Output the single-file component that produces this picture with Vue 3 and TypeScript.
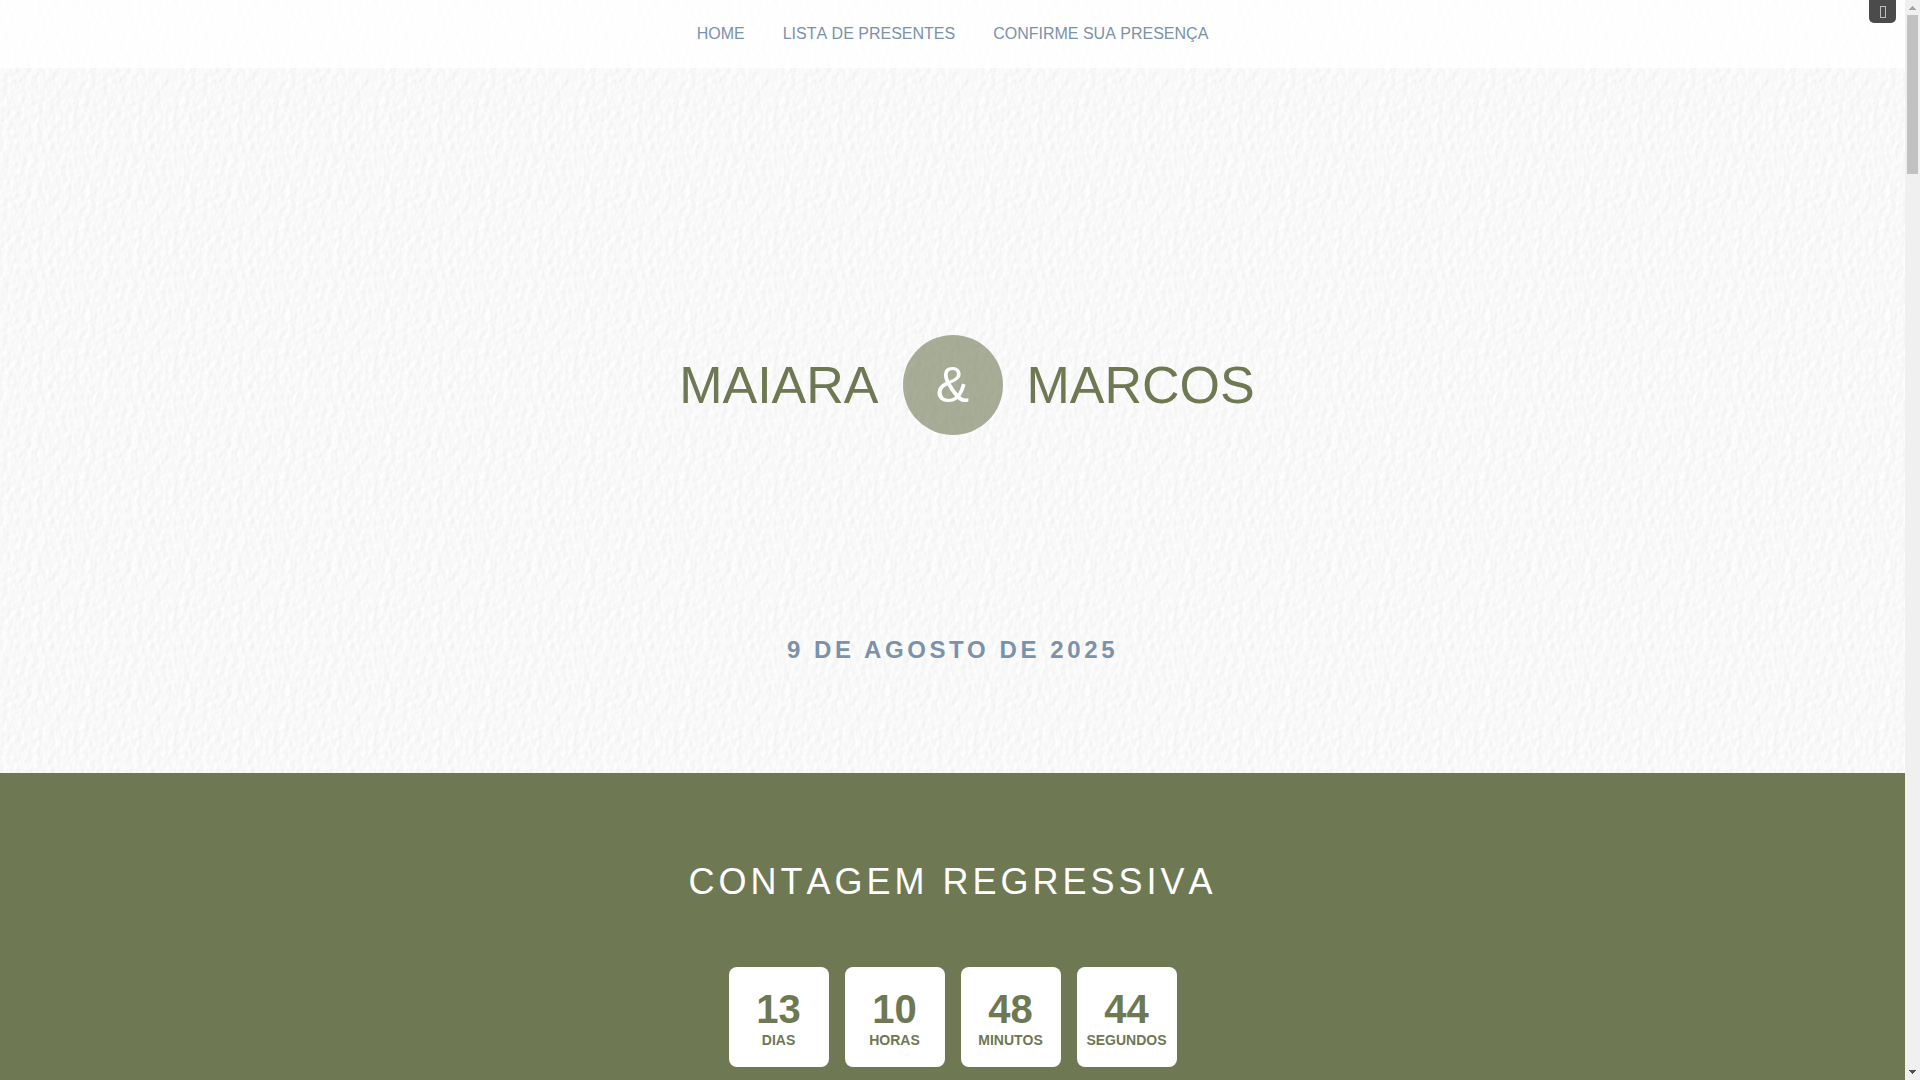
<script setup lang="ts">
interface NavLink {
  label: string
  href: string
}

interface CountdownUnit {
  value: number
  label: string
}

const links: NavLink[] = [
  { label: 'HOME', href: '#home' },
  { label: 'LISTA DE PRESENTES', href: '#presentes' },
  { label: 'CONFIRME SUA PRESENÇA', href: '#presenca' },
]

const countdown: CountdownUnit[] = [
  { value: 13, label: 'DIAS' },
  { value: 10, label: 'HORAS' },
  { value: 48, label: 'MINUTOS' },
  { value: 44, label: 'SEGUNDOS' },
]
</script>

<template>
  <div class="window">
    <div class="page">
      <header id="home" class="cover">
        <nav class="menu" aria-label="Principal">
          <a v-for="link in links" :key="link.href" class="menu-link" :href="link.href">{{ link.label }}</a>
        </nav>
        <button class="toggle" type="button" aria-label="Menu">
          <svg class="toggle-icon" viewBox="0 0 6 12" aria-hidden="true">
            <rect x=".5" y=".5" width="5" height="11" fill="none" stroke="#bdbdbd" />
          </svg>
        </button>
        <h1 class="couple">
          <span class="name name-left">MAIARA</span>
          <span class="ampersand">&amp;</span>
          <span class="name">MARCOS</span>
        </h1>
        <p class="date">9 DE AGOSTO DE 2025</p>
      </header>

      <section class="counter">
        <h2 class="counter-title">CONTAGEM REGRESSIVA</h2>
        <div class="units">
          <div v-for="unit in countdown" :key="unit.label" class="unit">
            <span class="unit-value">{{ unit.value }}</span>
            <span class="unit-label">{{ unit.label }}</span>
          </div>
        </div>
      </section>
    </div>

    <div class="scrollbar" aria-hidden="true">
      <svg class="arrow" viewBox="0 0 15 15" shape-rendering="crispEdges">
        <path d="M7 6h1v1h1v1h1v1h1v1H4V9h1V8h1V7h1z" fill="#a3a3a3" />
      </svg>
      <div class="track"><div class="thumb"></div></div>
      <svg class="arrow" viewBox="0 0 15 15" shape-rendering="crispEdges">
        <path d="M4 5h7v1h-1v1H9v1H8v1H7V8H6V7H5V6H4z" fill="#505050" />
      </svg>
    </div>
  </div>
</template>

<style>
body {
  margin: 0;
}
</style>

<style scoped>
.window {
  display: flex;
  height: 100vh;
  overflow: hidden;
  font-family: "Liberation Sans", Arial, sans-serif;
  font-kerning: none;
}

.page {
  display: flex;
  flex: 1;
  flex-direction: column;
  min-width: 0;
}

/* Embossed paper grain, tiled */
.cover {
  position: relative;
  flex: none;
  padding-bottom: 107px;
  background: #f8f8f8 url("data:image/svg+xml,%3Csvg xmlns='http://www.w3.org/2000/svg' width='100' height='125'%3E%3Cfilter id='p' x='0' y='0' width='100%25' height='100%25' color-interpolation-filters='sRGB'%3E%3CfeTurbulence type='fractalNoise' baseFrequency='.17 .13' numOctaves='2' seed='11' stitchTiles='stitch'/%3E%3CfeDiffuseLighting lighting-color='%23fff' surfaceScale='.17' diffuseConstant='1.115'%3E%3CfeDistantLight azimuth='205' elevation='61'/%3E%3C/feDiffuseLighting%3E%3C/filter%3E%3Crect width='100' height='125' filter='url(%23p)'/%3E%3C/svg%3E");
}

.menu {
  display: flex;
  align-items: center;
  justify-content: center;
  gap: 38px;
  height: 68px;
  background: rgba(255, 255, 255, 0.8);
}

.menu-link {
  color: #7a92aa;
  font-size: 16px;
  line-height: 20px;
  text-decoration: none;
}

.toggle {
  position: absolute;
  top: 0;
  right: 9px;
  display: flex;
  align-items: center;
  justify-content: center;
  width: 27px;
  height: 23px;
  padding: 0;
  border: 0;
  border-radius: 0 0 5px 5px;
  background: #4b4b4b;
}

.toggle-icon {
  width: 6px;
  height: 12px;
}

.couple {
  display: grid;
  grid-template-columns: 1fr 100px 1fr;
  align-items: center;
  gap: 24px;
  margin: 267px 0 199px;
  color: #6e7853;
  font-size: 52px;
  font-weight: 400;
  line-height: 60px;
}

.name-left {
  text-align: right;
}

.ampersand {
  height: 100px;
  border-radius: 50%;
  background: rgba(110, 120, 83, 0.6);
  color: #fff;
  font-size: 50px;
  line-height: 100px;
  text-align: center;
}

.date {
  margin: 0;
  color: #7a92aa;
  font-size: 24px;
  font-weight: 700;
  font-kerning: auto;
  letter-spacing: 0.15em;
  line-height: 32px;
  text-align: center;
}

.counter {
  flex: 1 0 auto;
  padding: 89px 0;
  background: #6e7853;
}

.counter-title {
  margin: 0 0 65px;
  color: #fff;
  font-size: 36px;
  font-weight: 400;
  letter-spacing: 4px;
  line-height: 40px;
  text-align: center;
}

.units {
  display: flex;
  justify-content: center;
  gap: 16px;
}

.unit {
  display: flex;
  flex-direction: column;
  align-items: center;
  box-sizing: border-box;
  width: 100px;
  height: 100px;
  padding-top: 22px;
  border-radius: 8px;
  background: #fff;
  color: #6e7853;
  font-weight: 700;
}

.unit-value {
  font-size: 40px;
  line-height: 40px;
}

.unit-label {
  font-size: 14px;
  line-height: 22px;
}

.scrollbar {
  display: flex;
  flex: none;
  flex-direction: column;
  width: 15px;
  background: #f0f0f0;
}

.arrow {
  flex: none;
  width: 15px;
  height: 15px;
}

.track {
  flex: 1;
  padding: 0 2px;
}

.thumb {
  height: 159px;
  background: #c1c1c1;
}
</style>
